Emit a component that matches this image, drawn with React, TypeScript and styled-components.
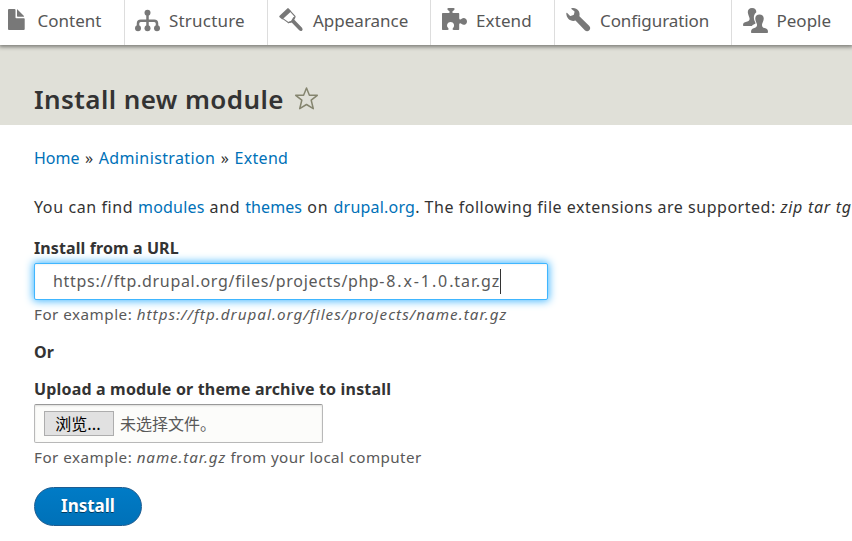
import React from "react";
import styled, { createGlobalStyle } from "styled-components";

const GlobalStyle = createGlobalStyle`
  * { box-sizing: border-box; }
  body {
    margin: 0;
    overflow: hidden;
    background: #fff;
    color: #333;
    font: 16px/24px "Noto Sans", "Noto Sans CJK SC", sans-serif;
  }
`;

const Page = styled.div`
  width: 100%;
  height: 541px;
  overflow: hidden;
`;

const Toolbar = styled.nav`
  position: relative;
  z-index: 1;
  display: flex;
  height: 45px;
  background: #fff;
  box-shadow: 0 1px 4px 1px rgba(0, 0, 0, 0.45);
`;

const Tab = styled.a<{ $width: number; $pad: number; $gap: number; $track?: number }>`
  display: flex;
  flex: none;
  width: ${(p) => p.$width}px;
  padding-left: ${(p) => p.$pad}px;
  gap: ${(p) => p.$gap}px;
  border-right: 1px solid #ddd;
  color: #565656;
  font-size: 17px;
  line-height: 42px;
  letter-spacing: ${(p) => p.$track ?? 0}px;
  white-space: nowrap;
`;

const Glyph = styled.svg`
  display: block;
  flex: none;
  margin-top: 7px;
  fill: #787878;
`;

const Header = styled.header`
  display: flex;
  height: 80px;
  padding: 36px 0 0 34px;
  gap: 10px;
  background: #e0e0d8;
`;

const Title = styled.h1`
  margin: 0;
  font-size: 26px;
  font-weight: 600;
  line-height: 36px;
  letter-spacing: 0.42px;
`;

const Star = styled.svg`
  display: block;
  margin-top: 5px;
  fill: none;
  stroke: #85856f;
  stroke-width: 1.5;
  stroke-linejoin: round;
`;

const Content = styled.main`
  padding: 21px 0 0 34px;
  white-space: nowrap;
`;

const Breadcrumb = styled.nav`
  display: flex;
  gap: 5.5px;
`;

const Run = styled.span<{ $track?: number }>`
  letter-spacing: ${(p) => p.$track ?? 0}px;
  white-space: pre;
`;

const Link = styled.a<{ $track?: number }>`
  color: #0071b8;
  letter-spacing: ${(p) => p.$track ?? 0}px;
`;

const Em = styled.em<{ $track?: number }>`
  letter-spacing: ${(p) => p.$track ?? 0}px;
`;

const Intro = styled.p`
  margin: 25px 0 17px;
`;

const Label = styled.label<{ $track?: number }>`
  display: block;
  font-weight: 700;
  letter-spacing: ${(p) => p.$track ?? 0}px;
`;

const UrlField = styled.div`
  display: flex;
  align-items: center;
  width: 514px;
  height: 37px;
  margin-top: 3px;
  padding: 0 0 1px 18px;
  border: 1px solid #40b6ff;
  border-radius: 2px;
  background: #fff;
  box-shadow: 0 0 8px 1px #40b6ff, inset 0 1px 2px rgba(0, 0, 0, 0.05);
  color: #595959;
`;

const Caret = styled.i`
  width: 1px;
  height: 25px;
  background: #333;
`;

const Hint = styled.div`
  margin-top: 2px;
  padding-bottom: 1px;
  color: #595959;
  font-size: 15.2px;
`;

const Or = styled.div`
  margin: 13px 0;
  font-weight: 700;
`;

const FileField = styled.div`
  display: flex;
  align-items: center;
  width: 289px;
  height: 39px;
  margin-top: 3px;
  padding-left: 9px;
  gap: 6px;
  border: 1px solid #b8b8b8;
  border-top-color: #999;
  border-radius: 2px;
  background: #fcfcfa;
  box-shadow: inset 0 1px 2px rgba(0, 0, 0, 0.125);
  color: #595959;
  font-family: "Noto Sans CJK SC", sans-serif;
`;

const FileStatus = styled.span`
  padding-bottom: 1px;
`;

const Browse = styled.button`
  width: 70px;
  height: 25px;
  padding: 0 2px 0 0;
  border: 1px solid #adadad;
  background: #e1e1e1;
  color: #000;
  font: 16px/21px "Noto Sans CJK SC", sans-serif;
`;

const Submit = styled.button`
  display: block;
  width: 108px;
  height: 39px;
  margin-top: 17px;
  padding: 0 0 2px;
  border: 1px solid #1e5c90;
  border-radius: 20px;
  background: linear-gradient(#007bc6, #0071b8);
  color: #fff;
  font: 700 17px/24px "Noto Sans", sans-serif;
  text-shadow: 0 1px rgba(0, 0, 0, 0.5);
`;

const FileIcon = () => (
  <Glyph width="17" height="30" viewBox="0 0 17 30">
    <path d="M1 2H6.500Q7.500 2 7.500 3V10.500Q7.500 11.300 8.300 11.300H16Q16.700 11.300 16.700 12V22Q16.700 23 15.700 23H1Q0 23 0 22V3Q0 2 1 2ZM9 2.500Q9 2 9.500 2.400L16 9Q16.400 9.700 15.500 9.700H9.700Q9 9.700 9 9Z" />
  </Glyph>
);

const StructureIcon = () => (
  <Glyph width="25" height="30" viewBox="0 0 25 30">
    <circle cx="12.500" cy="5.700" r="3" />
    <circle cx="3" cy="21.300" r="3" />
    <circle cx="12.500" cy="21.300" r="3" />
    <circle cx="22" cy="21.300" r="3" />
    <path d="M12.500 7V20M3 20V16.500Q3 13.700 5.800 13.700H19.200Q22 13.700 22 16.500V20" fill="none" stroke="#787878" strokeWidth="2.500" />
  </Glyph>
);

const BrushIcon = () => (
  <Glyph width="25" height="30" viewBox="0 0 25 30">
    <path d="M8.300 1.400Q9 .7 9.700 1.500L12.300 4.200L3.300 12.500L.6 10.200Q-.2 9.500 .6 8.700Z" />
    <path d="M11.200 4.200L16 9.300Q16.300 10.600 14.500 12Q14.200 14.600 12 14.800L9.500 15.600L3.500 11.400" fill="none" stroke="#787878" strokeWidth="1.100" />
    <path d="M14.300 10.200L16.300 9.200L15.300 12.700L23 20.700Q24.200 22.200 23.200 23.400Q21.700 24.500 20.200 23.200L12.700 15.500L9 16.300L8.700 15.200L12 14Z" />
  </Glyph>
);

const PuzzleIcon = () => (
  <Glyph width="25" height="30" viewBox="0 0 25 30">
    <path d="M0 6.700Q0 6 .7 6H6.600C8.100 6 8.100 4.700 6.400 3.600C5.100 2.700 4.900 1 6.500 1H11.500C13.100 1 12.900 2.700 11.600 3.600C9.900 4.700 9.900 6 11.400 6H16.500Q17.200 6 17.200 6.700V11C17.200 12.700 18.500 13 19.700 11.700C21.500 10 25 11.200 25 14.400C25 17.600 21.500 18.800 19.700 17.100C18.500 15.800 17.200 16.100 17.200 17.800V22.300Q17.200 23 16.500 23H11.900C10.300 23 10.100 21.800 11.400 20.600C13 18.800 11.800 15.100 8.600 15.100C5.400 15.100 4.200 18.800 5.800 20.600C7.100 21.800 6.900 23 5.300 23H.7Q0 23 0 22.300Z" />
  </Glyph>
);

const WrenchIcon = () => (
  <Glyph width="25" height="30" viewBox="0 0 25 30">
    <path d="M5.500 1.200C10.500 .1 14.700 4 13.400 9.300L23.100 18.800C24.600 20.300 24.500 22.100 23.300 23.300C22 24.700 20.100 24.500 18.800 23.200L9.500 13.600C4.600 15 .2 11.300.3 6.200C.4 5.600.8 5.500 1.200 5.900L3.900 8.700Q4.200 9 4.600 8.900L7.400 8Q7.800 7.800 7.900 7.400L8.500 4.900Q8.600 4.500 8.300 4.200L5.400 2Q4.900 1.400 5.500 1.200Z" />
  </Glyph>
);

const PeopleIcon = () => (
  <Glyph width="25" height="30" viewBox="0 0 25 30">
    <path d="M9 1C12 1 13.600 3 13.300 5.300C11 7.200 10.600 9.500 11 12C11.300 14 12.600 15.300 12.500 16.500C11.500 17.200 10 17.600 8.800 19H.7Q0 19 0 18.200C0 15.800 1.300 15.200 3.500 14.700C6 14 6.800 13 6.600 11.400C6.400 10 5 7.900 4.800 5.300C4.700 2.900 6.300 1 9 1Z" />
    <path d="M16.500 7.500C19.200 7.500 21 9.400 20.700 12C20.500 14.300 19.500 15.700 19.100 17C18.800 18.800 19.300 20.300 21.600 21.100C23.800 21.800 25 22.400 25 25Q25 26 24.200 26H8.800Q8 26 8 25.200C8 22.400 9.200 21.800 11.400 21.100C13.700 20.300 14.300 18.800 13.900 17C13.500 15.700 12.500 14.300 12.300 12C12 9.400 13.800 7.500 16.500 7.500Z" />
  </Glyph>
);

export default function App() {
  return (
    <Page>
      <GlobalStyle />
      <Toolbar>
        <Tab $width={125} $pad={8} $gap={12.5}><FileIcon />Content</Tab>
        <Tab $width={143} $pad={10} $gap={9} $track={0.2}><StructureIcon />Structure</Tab>
        <Tab $width={163} $pad={11} $gap={9}><BrushIcon />Appearance</Tab>
        <Tab $width={124} $pad={11} $gap={9} $track={0.1}><PuzzleIcon />Extend</Tab>
        <Tab $width={177} $pad={11} $gap={9} $track={-0.08}><WrenchIcon />Configuration</Tab>
        <Tab $width={140} $pad={11} $gap={8.5}><PeopleIcon />People</Tab>
      </Toolbar>
      <Header>
        <Title>Install new module</Title>
        <Star width="25" height="26" viewBox="0 0 25 26">
          <path d="M12.500 2L15.400 9.300H23.300L17.200 14.200L19.300 22.700L12.500 18.500L5.700 22.700L7.800 14.200L1.700 9.300H9.600Z" />
        </Star>
      </Header>
      <Content>
        <Breadcrumb>
          <Link>Home</Link>
          <span>»</span>
          <Link $track={0.38}>Administration</Link>
          <span>»</span>
          <Link $track={0.3}>Extend</Link>
        </Breadcrumb>
        <Intro>
          <Run $track={0.6}>You can find </Run>
          <Link $track={0.2}>modules</Link>
          <Run $track={0.7}> and </Run>
          <Link $track={0.1}>themes</Link>
          <Run $track={0.9}> on </Run>
          <Link $track={0.2}>drupal.org</Link>
          <Run $track={0.52}>. The following file extensions are supported: </Run>
          <Em $track={0.72}>zip tar tg</Em>
        </Intro>
        <Label $track={0.1}>Install from a URL</Label>
        <UrlField>
          <Run $track={0.7}>https://ftp.drupal.org/files/projects/</Run>
          <Run $track={0.5}>php</Run>
          <Run $track={1.9}>-8.x-1.0</Run>
          <Run $track={0.9}>.tar.gz</Run>
          <Caret />
        </UrlField>
        <Hint>
          <Run $track={0.5}>For example: </Run>
          <Em $track={1.05}>https://ftp.drupal.org/files/projects/name.tar.gz</Em>
        </Hint>
        <Or>Or</Or>
        <Label $track={0.17}>Upload a module or theme archive to install</Label>
        <FileField>
          <Browse>浏览...</Browse>
          <FileStatus>未选择文件。</FileStatus>
        </FileField>
        <Hint>
          <Run $track={0.5}>For example: </Run>
          <Em $track={0.9}>name.tar.gz</Em>
          <Run $track={0.4}> from your local computer</Run>
        </Hint>
        <Submit>Install</Submit>
      </Content>
    </Page>
  );
}
